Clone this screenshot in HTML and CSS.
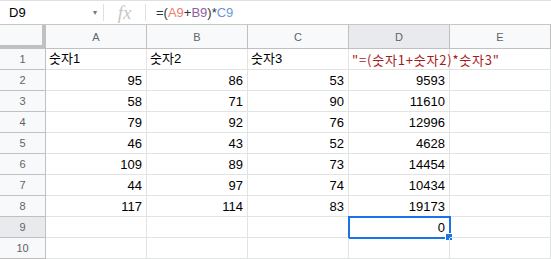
FILE: index.html
```html
<html>
<head>
  <title>Sheet</title>
  <link rel="stylesheet" href="styles.css">
</head>
<body>
  <div class="formula-bar">
    <div class="name-box">
      <span class="cell-ref">D9</span>
      <span class="caret">&#9662;</span>
    </div>
    <div class="fx">fx</div>
    <div class="formula">=(<span class="ref-a">A9</span>+<span class="ref-b">B9</span>)*<span class="ref-c">C9</span></div>
  </div>

  <div class="grid">
    <div class="corner"></div>
    <div class="col-head">A</div>
    <div class="col-head">B</div>
    <div class="col-head">C</div>
    <div class="col-head active">D</div>
    <div class="col-head">E</div>

    <div class="row-head">1</div>
    <div class="cell">숫자1</div>
    <div class="cell">숫자2</div>
    <div class="cell">숫자3</div>
    <div class="cell label-red">"=(숫자1+숫자2)*숫자3"</div>
    <div class="cell"></div>

    <div class="row-head">2</div>
    <div class="cell num">95</div>
    <div class="cell num">86</div>
    <div class="cell num">53</div>
    <div class="cell num">9593</div>
    <div class="cell"></div>

    <div class="row-head">3</div>
    <div class="cell num">58</div>
    <div class="cell num">71</div>
    <div class="cell num">90</div>
    <div class="cell num">11610</div>
    <div class="cell"></div>

    <div class="row-head">4</div>
    <div class="cell num">79</div>
    <div class="cell num">92</div>
    <div class="cell num">76</div>
    <div class="cell num">12996</div>
    <div class="cell"></div>

    <div class="row-head">5</div>
    <div class="cell num">46</div>
    <div class="cell num">43</div>
    <div class="cell num">52</div>
    <div class="cell num">4628</div>
    <div class="cell"></div>

    <div class="row-head">6</div>
    <div class="cell num">109</div>
    <div class="cell num">89</div>
    <div class="cell num">73</div>
    <div class="cell num">14454</div>
    <div class="cell"></div>

    <div class="row-head">7</div>
    <div class="cell num">44</div>
    <div class="cell num">97</div>
    <div class="cell num">74</div>
    <div class="cell num">10434</div>
    <div class="cell"></div>

    <div class="row-head">8</div>
    <div class="cell num">117</div>
    <div class="cell num">114</div>
    <div class="cell num">83</div>
    <div class="cell num">19173</div>
    <div class="cell"></div>

    <div class="row-head active">9</div>
    <div class="cell"></div>
    <div class="cell"></div>
    <div class="cell"></div>
    <div class="cell num selected">0<span class="handle"></span></div>
    <div class="cell"></div>

    <div class="row-head">10</div>
    <div class="cell"></div>
    <div class="cell"></div>
    <div class="cell"></div>
    <div class="cell"></div>
    <div class="cell"></div>
  </div>
</body>
</html>
```

FILE: styles.css
```css
body {
  margin: 0;
  padding: 0;
  background-color: white;
  font-family: "Liberation Sans", Arial, "Noto Sans CJK KR", sans-serif;
  color: #000;
}

.formula-bar {
  display: flex;
  align-items: center;
  height: 23px;
  border-top: 1px solid #e0e0e0;
  border-bottom: 1px solid #c7c7c7;
  box-sizing: content-box;
}

.name-box {
  display: flex;
  align-items: center;
  justify-content: space-between;
  width: 94px;
  padding-left: 9px;
  border-right: 1px solid #e0e0e0;
  height: 17px;
  font-size: 13px;
}

.caret {
  font-size: 8px;
  color: #777;
  margin-right: 6px;
}

.fx {
  width: 41px;
  height: 17px;
  text-align: center;
  font-family: "Liberation Serif", serif;
  font-style: italic;
  font-size: 19px;
  line-height: 17px;
  color: #c7c7c7;
  border-right: 1px solid #e0e0e0;
}

.formula {
  padding-left: 10px;
  font-size: 13px;
  color: #333;
}

.ref-a { color: #ee7d6c; }
.ref-b { color: #8e5ea2; }
.ref-c { color: #6a97d4; }

.grid {
  display: grid;
  grid-template-columns: 46px 101px 101px 101px 101px 1fr;
  grid-template-rows: 24px repeat(10, 21px);
  font-size: 13px;
}

.corner {
  background-color: #f8f9fa;
  border-right: 4px solid #c0c0c0;
  border-bottom: 4px solid #c0c0c0;
  box-sizing: border-box;
}

.col-head, .row-head {
  background-color: #f8f9fa;
  color: #5f6368;
  font-size: 11px;
  display: flex;
  align-items: center;
  justify-content: center;
  box-sizing: border-box;
  border-right: 1px solid #c0c0c0;
  border-bottom: 1px solid #c0c0c0;
}

.col-head.active, .row-head.active {
  background-color: #e8eaed;
}

.cell {
  box-sizing: border-box;
  border-right: 1px solid #e2e3e3;
  border-bottom: 1px solid #e2e3e3;
  padding: 0 3px;
  display: flex;
  align-items: flex-end;
  padding-bottom: 2px;
  white-space: nowrap;
  position: relative;
}

.num {
  justify-content: flex-end;
  padding-right: 4px;
}

.label-red {
  color: #a61c1c;
  font-family: "Noto Sans CJK KR", sans-serif;
  letter-spacing: 0.8px;
  line-height: 17px;
  padding-bottom: 1px;
}

.selected {
  outline: 2px solid #1a73e8;
  outline-offset: -1px;
}

.handle {
  position: absolute;
  right: -4px;
  bottom: -4px;
  width: 6px;
  height: 6px;
  background-color: #1a73e8;
  border: 1px solid white;
}
```
